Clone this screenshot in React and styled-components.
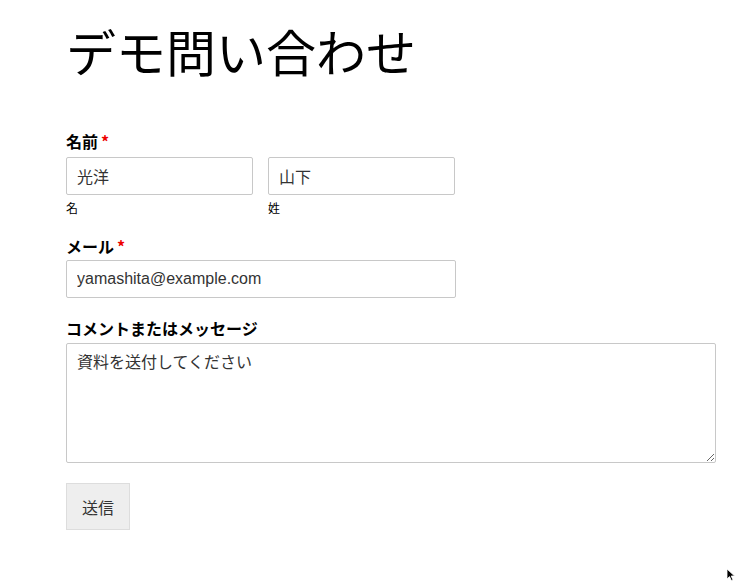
import React from 'react'
import styled, { createGlobalStyle } from 'styled-components'

const GlobalStyle = createGlobalStyle`
  html, body {
    margin: 0;
    padding: 0;
    background: #fff;
  }
  body {
    font-family: "Liberation Sans", "Noto Sans CJK JP", sans-serif;
    color: #000;
  }
`

const Page = styled.main`
  position: relative;
  width: 752px;
  height: 581px;
  box-sizing: border-box;
  padding: 20px 0 0 66px;
  overflow: hidden;
`

const Title = styled.h1`
  margin: 0;
  font-family: "Noto Sans CJK JP", sans-serif;
  font-size: 50px;
  font-weight: 400;
  line-height: 60px;
`

const Form = styled.form`
  display: flex;
  flex-direction: column;
  gap: 20px;
  margin-top: 51px;
`

const Field = styled.div`
  display: flex;
  flex-direction: column;
  gap: ${p => p.$gap || 5}px;
`

const Label = styled.label`
  font-family: "Noto Sans CJK JP", sans-serif;
  font-size: 16px;
  font-weight: 700;
  line-height: 20px;
`

const Required = styled.span`
  color: #e00;
  margin-left: 3px;
`

const NameRow = styled.div`
  display: flex;
  gap: 15px;
`

const NamePart = styled.div`
  display: flex;
  flex-direction: column;
  gap: 5px;
`

const SubLabel = styled.span`
  font-family: "Noto Sans CJK JP", sans-serif;
  font-size: 12px;
  line-height: 16px;
`

const Input = styled.input`
  box-sizing: border-box;
  width: ${p => p.$width}px;
  height: 38px;
  padding: 0 10px;
  border: 1px solid #c8c8c8;
  border-radius: 2px;
  font-family: "Liberation Sans", "Noto Sans CJK JP", sans-serif;
  font-size: 16px;
  color: #333;
  background: #fff;
  outline: none;
`

const TextArea = styled.textarea`
  box-sizing: border-box;
  width: 650px;
  height: 120px;
  padding: 6px 10px;
  border: 1px solid #c8c8c8;
  border-radius: 2px;
  font-family: "Noto Sans CJK JP", sans-serif;
  font-size: 16px;
  line-height: 22px;
  color: #333;
  outline: none;
  display: block;
`

const SubmitButton = styled.button`
  align-self: flex-start;
  height: 47px;
  padding: 0 15px;
  background: #eee;
  border: 1px solid #ddd;
  border-radius: 0;
  font-family: "Noto Sans CJK JP", sans-serif;
  font-size: 16px;
  color: #333;
`

const Cursor = styled.svg`
  position: absolute;
  left: 726px;
  top: 568px;
`

export default function App() {
  return (
    <Page>
      <GlobalStyle />
      <Title>デモ問い合わせ</Title>
      <Form onSubmit={e => e.preventDefault()}>
        <Field $gap={6}>
          <Label>名前<Required>*</Required></Label>
          <NameRow>
            <NamePart>
              <Input $width={187} defaultValue="光洋" />
              <SubLabel>名</SubLabel>
            </NamePart>
            <NamePart>
              <Input $width={187} defaultValue="山下" />
              <SubLabel>姓</SubLabel>
            </NamePart>
          </NameRow>
        </Field>
        <Field $gap={4}>
          <Label>メール<Required>*</Required></Label>
          <Input $width={390} type="email" defaultValue="yamashita@example.com" />
        </Field>
        <Field $gap={5}>
          <Label>コメントまたはメッセージ</Label>
          <TextArea defaultValue="資料を送付してください" />
        </Field>
        <SubmitButton type="submit">送信</SubmitButton>
      </Form>
      <Cursor width="10" height="14" viewBox="0 0 10 14">
        <path d="M1 1 L1 11 L3.5 8.6 L5.4 12.6 L7 11.9 L5.2 8 L8.6 8 Z" fill="#000" stroke="#fff" strokeWidth="0.8" />
      </Cursor>
    </Page>
  )
}
